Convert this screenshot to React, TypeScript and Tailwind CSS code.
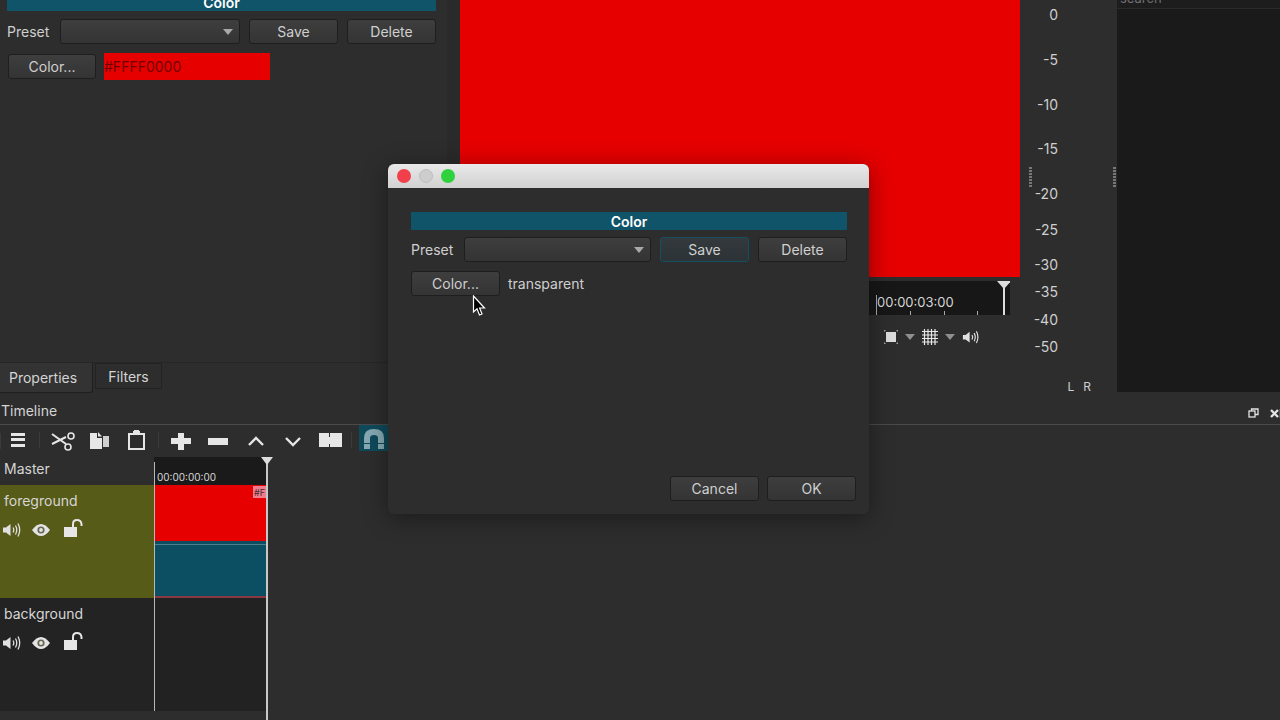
import React from "react";

const F = { fontFamily: "Inter, 'Liberation Sans', sans-serif" };

function Btn({ w, label, focus }: { w: string; label: string; focus?: boolean }) {
  return (
    <div
      className={`${w} h-[25px] shrink-0 flex items-center justify-center rounded-[3px] border text-[14px] text-[#cfcfcf] bg-linear-to-b ${
        focus
          ? "border-[#14505f] from-[#33393c] to-[#2c3336]"
          : "border-[#1e1e1e] from-[#3e3e3e] to-[#343434]"
      }`}
    >
      {label}
    </div>
  );
}

function Caret({ c = "#a8a8a8" }: { c?: string }) {
  return (
    <svg width="10" height="6" viewBox="0 0 10 6">
      <path d="M0 0H10L5 6Z" fill={c} />
    </svg>
  );
}

function Combo({ w }: { w: string }) {
  return (
    <div className={`${w} h-[25px] shrink-0 flex items-center justify-end pr-[6px] rounded-[3px] border border-[#1e1e1e] bg-linear-to-b from-[#3e3e3e] to-[#343434]`}>
      <Caret />
    </div>
  );
}

function PresetRow({ labelW, comboW, btnW, saveFocus }: { labelW: string; comboW: string; btnW: string; saveFocus?: boolean }) {
  return (
    <div className="flex items-center">
      <div className={`${labelW} shrink-0 text-[14px] text-[#cfcfcf]`}>Preset</div>
      <Combo w={comboW} />
      <div className="w-[9px] shrink-0" />
      <Btn w={btnW} label="Save" focus={saveFocus} />
      <div className="w-[9px] shrink-0" />
      <Btn w={btnW} label="Delete" />
    </div>
  );
}

function Speaker({ s = 20 }: { s?: number }) {
  return (
    <svg width={s} height={s * 0.8} viewBox="0 0 20 16" fill="none">
      <path d="M1 5.5H4L8.5 2V14L4 10.5H1Z" fill="#e0e0e0" />
      <path d="M11 5.5Q12.6 8 11 10.5M13.5 3.5Q16 8 13.5 12.5M16 1.5Q19.4 8 16 14.5" stroke="#e0e0e0" strokeWidth="1.3" />
    </svg>
  );
}

function Eye() {
  return (
    <svg width="18" height="12" viewBox="0 0 18 12">
      <path d="M0 6Q4.5 0 9 0T18 6Q13.5 12 9 12T0 6Z" fill="#e4e4e4" />
      <circle cx="9" cy="6" r="3.6" fill="#3d3d20" fillOpacity="0.75" />
      <circle cx="9" cy="6" r="1.9" fill="#e4e4e4" />
    </svg>
  );
}

function Lock() {
  return (
    <svg width="19" height="18" viewBox="0 0 19 18" fill="none">
      <rect x="0" y="8" width="13" height="10" fill="#e6e6e6" />
      <path d="M9 8V5Q9 1 13 1T17.5 5V7" stroke="#e6e6e6" strokeWidth="2" />
    </svg>
  );
}

function TrackHead({ name, bg }: { name: string; bg: string }) {
  return (
    <div className={`${bg} h-[113px] w-[154px] shrink-0 pl-[4px] pt-[6px]`}>
      <div className="text-[14px] leading-[20px] text-[#d6d6d6]">{name}</div>
      <div className="flex items-center mt-[11px] -ml-[2px]">
        <Speaker />
        <div className="ml-[10px]"><Eye /></div>
        <div className="ml-[14px] -mt-[4px]"><Lock /></div>
      </div>
    </div>
  );
}

const TB = "#e6e6e6";

function Toolbar() {
  const Sep = () => <div className="w-px h-[16px] bg-[#3b3b3b]" />;
  return (
    <div className="h-[32px] w-[388px] flex items-center relative">
      <svg width="388" height="32" viewBox="0 0 388 32" className="absolute left-0 top-0">
        <g fill={TB}>
          <rect x="11" y="8" width="14" height="3" />
          <rect x="11" y="13" width="14" height="3" />
          <rect x="11" y="19" width="14" height="3" />
          <rect x="39" y="7" width="1" height="16" fill="#3b3b3b" />
          <rect x="158" y="7" width="1" height="16" fill="#3b3b3b" />
          <rect x="351" y="7" width="1" height="16" fill="#3b3b3b" />
          {/* copy */}
          <path d="M90 8H97V13H102V24H90Z" />
          <path d="M98 7L102 11.5H98Z" />
          <path d="M103 11H109V22H103Z" fill="#cfcfcf" />
          {/* paste */}
          <path d="M128 8H133V6H140V8H145V25H128ZM130 10V23H143V10Z" />
          <rect x="134" y="5" width="5" height="2" />
          {/* plus */}
          <path d="M178 8H184V13H191V19H184V25H178V19H171V13H178Z" />
          {/* minus */}
          <rect x="208" y="13" width="20" height="7" />
          {/* split */}
          <path d="M319 8H329V12H330V8H342V22H330V19H329V22H319Z" />
        </g>
        {/* scissors */}
        <g fill="none" stroke={TB} strokeWidth="1.6">
          <path d="M52 9L66 19" strokeWidth="2" />
          <path d="M52 19L66 12" strokeWidth="2" />
          <circle cx="71" cy="11" r="3" />
          <circle cx="68" cy="22" r="3" />
        </g>
        {/* up / down */}
        <path d="M249 20L256 13L263 20" fill="none" stroke={TB} strokeWidth="2.4" />
        <path d="M286 13L293 20L300 13" fill="none" stroke={TB} strokeWidth="2.4" />
        {/* magnet */}
        <rect x="359" y="0" width="29" height="26" fill="#0f4a5b" />
        <path d="M364 24V13Q364 4 374 4T384 13V24H378V13Q378 10 374 10T370 13V24Z" fill="#86a9b3" />
        <rect x="364" y="18" width="6" height="1" fill="#0f4a5b" />
        <rect x="378" y="18" width="6" height="1" fill="#0f4a5b" />
      </svg>
      <Sep />
    </div>
  );
}

const meter: [string, string][] = [
  ["0", "h-[45px]"],
  ["-5", "h-[45px]"],
  ["-10", "h-[44px]"],
  ["-15", "h-[45px]"],
  ["-20", "h-[36px]"],
  ["-25", "h-[35px]"],
  ["-30", "h-[27px]"],
  ["-35", "h-[28px]"],
  ["-40", "h-[27px]"],
  ["-50", "h-[37px]"],
];

function Grip() {
  return (
    <svg width="3" height="20" viewBox="0 0 3 20">
      {[0, 3, 6, 9, 12, 15, 18].map((y) => (
        <rect key={y} x="0" y={y} width="3" height="2" fill="#777" />
      ))}
    </svg>
  );
}

export default function App() {
  return (
    <div style={F} className="relative w-[1280px] h-[720px] overflow-hidden bg-[#2d2d2d] flex flex-col">
      {/* upper dock */}
      <div className="h-[392px] flex shrink-0">
        {/* left properties panel */}
        <div className="w-[447px] shrink-0 flex flex-col">
          <div className="mx-[7px] w-[429px] h-[11px] bg-[#0f5468] flex items-end justify-center overflow-hidden">
            <span className="text-[14px] leading-[18px] font-semibold text-white -mb-[1px]">Color</span>
          </div>
          <div className="pl-[7px] mt-[8px]">
            <PresetRow labelW="w-[53px]" comboW="w-[180px]" btnW="w-[89px]" />
          </div>
          <div className="pl-[8px] mt-[9px] flex items-center">
            <Btn w="w-[88px]" label="Color..." />
            <div className="ml-[8px] w-[166px] h-[27px] bg-[#e60000] flex items-center text-[14px] text-[#700000]">#FFFF0000</div>
          </div>
          <div className="mt-auto h-[30px] border-t border-[#262626] flex items-start">
            <div className="w-[93px] h-[30px] rounded-br-[3px] border-r border-b border-[#1f1f1f] bg-[#333333] flex items-center pl-[9px] text-[14px] text-[#d4d4d4]">Properties</div>
            <div className="ml-[2px] w-[67px] h-[26px] border border-[#232323] flex items-center justify-center text-[14px] text-[#d4d4d4]">Filters</div>
          </div>
        </div>
        <div className="w-[13px] shrink-0 bg-[#2a2a2a]" />
        {/* player */}
        <div className="w-[560px] shrink-0 flex flex-col">
          <div className="h-[277px] bg-[#e60000]" />
          <div className="relative mt-[4px] h-[34px] w-[550px] bg-[#171717]">
            <svg width="550" height="34" viewBox="0 0 550 34" className="absolute left-0 top-0">
              <rect x="416" y="14" width="1" height="20" fill="#aaa" />
              <rect x="450" y="30" width="1" height="4" fill="#aaa" />
              <rect x="484" y="30" width="1" height="4" fill="#aaa" />
              <rect x="517" y="30" width="1" height="4" fill="#aaa" />
              <rect x="543" y="4" width="2" height="30" fill="#ddd" />
              <path d="M537 0H551L544 8Z" fill="#ddd" />
            </svg>
            <div className="relative pl-[417px] pt-[13px] text-[13px] leading-[16px] text-[#d6d6d6]">00:00:03:00</div>
          </div>
          <div className="mt-[14px] flex items-center pl-[424px]">
            <svg width="14" height="14" viewBox="0 0 14 14" fill="none">
              <rect x="2" y="2" width="10" height="10" fill="#dcdcdc" />
              <path d="M0 2V0H2M12 0H14V2M14 12V14H12M2 14H0V12" stroke="#bbb" strokeWidth="1" />
            </svg>
            <div className="ml-[7px]"><Caret c="#8f8f8f" /></div>
            <svg className="ml-[7px]" width="16" height="16" viewBox="0 0 16 16">
              <path d="M2.5 0V16M6 0V16M9.5 0V16M13 0V16M0 2.5H16M0 6H16M0 9.5H16M0 13H16" stroke="#e8e8e8" strokeWidth="1.2" />
            </svg>
            <div className="ml-[7px]"><Caret c="#8f8f8f" /></div>
            <div className="ml-[7px]"><Speaker s={18} /></div>
          </div>
        </div>
        {/* meters */}
        <div className="w-[97px] shrink-0 relative">
          <div className="w-[38px] pt-[6px] flex flex-col text-[14px] text-[#cfcfcf]">
            {meter.map(([t, h]) => (
              <div key={t} className={`${h} leading-[18px] text-right`}>{t}</div>
            ))}
          </div>
          <div className="flex justify-end w-[71px] gap-[9px] mt-[-7px] text-[12px] leading-[16px] text-[#cfcfcf] mt-[4px]">
            <span>L</span>
            <span>R</span>
          </div>
          <div className="absolute left-[9px] top-[167px]"><Grip /></div>
          <div className="absolute right-[1px] top-[167px]"><Grip /></div>
        </div>
        {/* right panel */}
        <div className="flex-1 bg-[#1a1a1a] flex flex-col">
          <div className="h-[9px] border-b border-[#2a2a2a] bg-[#1d1d1d] overflow-hidden">
            <div className="text-[13px] leading-[14px] -mt-[9px] pl-[3px] text-[#6f6f6f]">search</div>
          </div>
        </div>
      </div>

      {/* timeline dock */}
      <div className="h-[33px] shrink-0 flex items-end justify-between border-b border-[#4a4a4a] pb-[3px]">
        <div className="text-[14px] leading-[20px] text-[#d4d4d4] pl-[1px]">Timeline</div>
        <div className="flex items-center gap-[11px] mb-[3px] -mr-[3px]">
          <svg width="11" height="10" viewBox="0 0 11 10" fill="none" stroke="#e4e4e4" strokeWidth="1.3">
            <rect x="1" y="3" width="6" height="6" />
            <path d="M3.5 3V1H10V6.5H7" />
          </svg>
          <svg width="13" height="9" viewBox="0 0 13 9" stroke="#e4e4e4" strokeWidth="2.4">
            <path d="M1 1L8 8M8 1L1 8M11 0V9" />
          </svg>
        </div>
      </div>
      <Toolbar />
      <div className="flex-1 relative flex flex-col">
        <div className="h-[28px] shrink-0 flex">
          <div className="w-[154px] pl-[4px] text-[14px] leading-[24px] text-[#d4d4d4]">Master</div>
          <div className="w-[113px] bg-[#1a1a1a] flex items-end pl-[3px] pb-[1px] text-[10px] leading-[14px] text-[#d8d8d8]">00:00:00:00</div>
        </div>
        <div className="flex shrink-0">
          <TrackHead name="foreground" bg="bg-[#575b18]" />
          <div className="w-[113px] h-[113px] flex flex-col">
            <div className="h-[56px] bg-[#e60000] flex justify-end">
              <div className="h-[12px] w-[14px] mt-[1px] bg-[#ee7d90] text-[9px] leading-[13px] text-[#4a2a2a] overflow-hidden pl-[1px]">#F</div>
            </div>
            <div className="flex-1 bg-[#0c4f63] border-b-2 border-[#8a3842] flex flex-col">
              <div className="h-[4px] border-b border-[#4d7f8c] bg-[#0e4c5f]" />
            </div>
          </div>
        </div>
        <div className="flex shrink-0">
          <TrackHead name="background" bg="bg-[#232323]" />
          <div className="w-[113px] h-[113px] bg-[#222222]" />
        </div>
        {/* playheads */}
        <div className="absolute left-[154px] top-[5px] h-[249px] w-[1px] bg-[#b8b8b8]" />
        <div className="absolute left-[266px] top-[2px] bottom-0 w-[2px] bg-[#c8c8c8]" />
        <svg className="absolute left-[261px] top-0" width="12" height="8" viewBox="0 0 12 8">
          <path d="M0 0H12L6 8Z" fill="#ddd" />
        </svg>
      </div>

      {/* dialog window */}
      <div className="absolute left-[388px] top-[164px] w-[481px] h-[350px] rounded-[6px] bg-[#2d2d2d] shadow-[0_4px_24px_rgba(0,0,0,0.4)] flex flex-col overflow-hidden">
        <div className="h-[24px] shrink-0 flex items-center bg-linear-to-b from-[#e9e9e9] to-[#d1d1d1] pl-[9px] gap-[8px]">
          <div className="w-[14px] h-[14px] rounded-full bg-[#f1404b]" />
          <div className="w-[14px] h-[14px] rounded-full bg-[#cdcdcd] border border-[#bdbdbd]" />
          <div className="w-[14px] h-[14px] rounded-full bg-[#2fd13d]" />
        </div>
        <div className="flex-1 flex flex-col px-[23px] pt-[24px] pb-[13px]">
          <div className="h-[18px] w-[436px] bg-[#0f5468] flex items-center justify-center text-[14px] font-semibold text-white">Color</div>
          <div className="mt-[7px]">
            <PresetRow labelW="w-[53px]" comboW="w-[187px]" btnW="w-[89px]" saveFocus />
          </div>
          <div className="mt-[9px] flex items-center">
            <Btn w="w-[89px]" label="Color..." />
            <div className="ml-[8px] text-[14px] text-[#cfcfcf]">transparent</div>
          </div>
          <div className="mt-auto flex justify-end -mr-[10px] gap-[8px]">
            <Btn w="w-[89px]" label="Cancel" />
            <Btn w="w-[89px]" label="OK" />
          </div>
        </div>
      </div>

      {/* mouse pointer */}
      <svg className="absolute left-[472px] top-[295px]" width="14" height="22" viewBox="0 0 14 22">
        <path d="M1.5 1V17L5 13.8L7.5 20L10 19L7.6 13H12.5Z" fill="#000" stroke="#fff" strokeWidth="1.2" />
      </svg>
    </div>
  );
}
